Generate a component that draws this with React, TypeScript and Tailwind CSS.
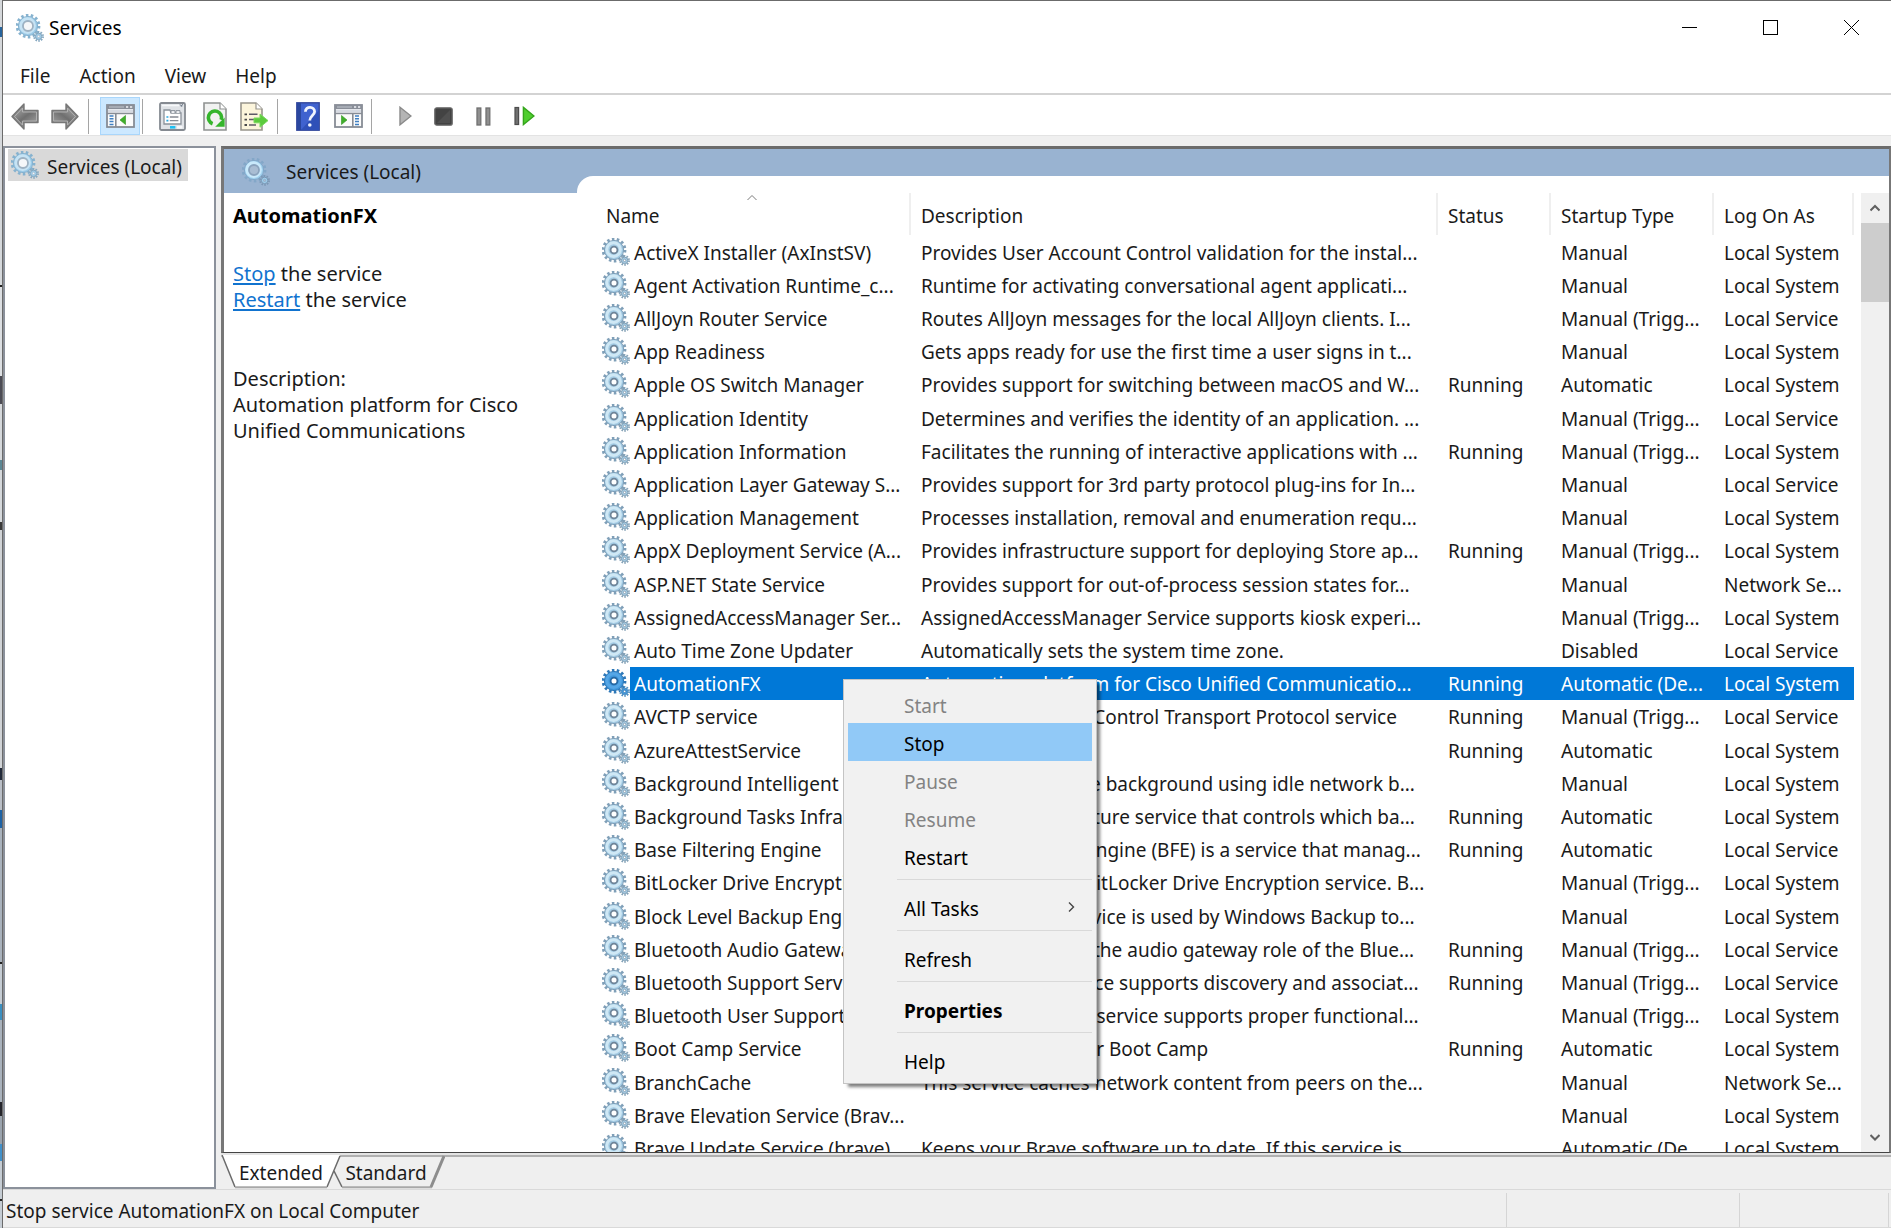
import type { ReactNode } from "react";

type Service = [name: string, description: string, status: string, startup: string, logon: string];

const LS = "Local System";
const LV = "Local Service";
const MT = "Manual (Trigg...";

const services: Service[] = [
  ["ActiveX Installer (AxInstSV)", "Provides User Account Control validation for the instal...", "", "Manual", LS],
  ["Agent Activation Runtime_c...", "Runtime for activating conversational agent applicati...", "", "Manual", LS],
  ["AllJoyn Router Service", "Routes AllJoyn messages for the local AllJoyn clients. I...", "", MT, LV],
  ["App Readiness", "Gets apps ready for use the first time a user signs in t...", "", "Manual", LS],
  ["Apple OS Switch Manager", "Provides support for switching between macOS and W...", "Running", "Automatic", LS],
  ["Application Identity", "Determines and verifies the identity of an application. ...", "", MT, LV],
  ["Application Information", "Facilitates the running of interactive applications with ...", "Running", MT, LS],
  ["Application Layer Gateway S...", "Provides support for 3rd party protocol plug-ins for In...", "", "Manual", LV],
  ["Application Management", "Processes installation, removal and enumeration requ...", "", "Manual", LS],
  ["AppX Deployment Service (A...", "Provides infrastructure support for deploying Store ap...", "Running", MT, LS],
  ["ASP.NET State Service", "Provides support for out-of-process session states for...", "", "Manual", "Network Se..."],
  ["AssignedAccessManager Ser...", "AssignedAccessManager Service supports kiosk experi...", "", MT, LS],
  ["Auto Time Zone Updater", "Automatically sets the system time zone.", "", "Disabled", LV],
  ["AutomationFX", "Automation platform for Cisco Unified Communicatio...", "Running", "Automatic (De...", LS],
  ["AVCTP service", "This is Audio Video Control Transport Protocol service", "Running", MT, LV],
  ["AzureAttestService", "", "Running", "Automatic", LS],
  ["Background Intelligent T...", "Transfers files in the background using idle network b...", "", "Manual", LS],
  ["Background Tasks Infrast...", "Windows infrastructure service that controls which ba...", "Running", "Automatic", LS],
  ["Base Filtering Engine", "The Base Filtering Engine (BFE) is a service that manag...", "Running", "Automatic", LV],
  ["BitLocker Drive Encryptio...", "BDESVC hosts the BitLocker Drive Encryption service. B...", "", MT, LS],
  ["Block Level Backup Engi...", "The WBENGINE service is used by Windows Backup to...", "", "Manual", LS],
  ["Bluetooth Audio Gateway...", "Service supporting the audio gateway role of the Blue...", "Running", MT, LV],
  ["Bluetooth Support Service", "The Bluetooth service supports discovery and associat...", "Running", MT, LV],
  ["Bluetooth User Support S...", "The Bluetooth user service supports proper functional...", "", MT, LS],
  ["Boot Camp Service", "Provides services for Boot Camp", "Running", "Automatic", LS],
  ["BranchCache", "This service caches network content from peers on the...", "", "Manual", "Network Se..."],
  ["Brave Elevation Service (Brav...", "", "", "Manual", LS],
  ["Brave Update Service (brave)", "Keeps your Brave software up to date. If this service is...", "", "Automatic (De...", LS],
];

const SELECTED = 13;

function GearIcon({ tone = "list" }: { tone?: "list" | "selected" | "pale" | "faint" }) {
  const c = {
    list: { edge: "#7f9fb8", body: "#a3cbe4", light: "#cfe8f5", ring: "#6f8599", hole: "#ffffff", small: "#86a3b8" },
    selected: { edge: "#2e78b8", body: "#3f97dc", light: "#55a6e6", ring: "#2567a3", hole: "#ffffff", small: "#4f8fc2" },
    pale: { edge: "#86b2cf", body: "#9ccbe8", light: "#c6e3f4", ring: "#9fb2c2", hole: "#f5f7f9", small: "#86a8c0" },
    faint: { edge: "#83a7c8", body: "#9fd0ee", light: "#c9e9fb", ring: "#8ba3bd", hole: "#a9bdd3", small: "#7b98b5" },
  }[tone];
  const hole = tone === "list" || tone === "selected" ? 3.4 : 5;
  return (
    <svg viewBox="0 0 28 28" className="block size-7 shrink-0" aria-hidden="true">
      <circle cx="12" cy="12" r="10.8" fill="none" stroke={c.edge} strokeWidth="3.2" strokeDasharray="2.5 2.347" />
      <circle cx="12" cy="12" r="9.6" fill={c.body} stroke={c.edge} strokeWidth="1" />
      <circle cx="11.6" cy="11.6" r="6.8" fill="none" stroke={c.light} strokeWidth="3" />
      <circle cx="12" cy="12" r={hole} fill={c.hole} stroke={c.ring} strokeWidth="1.8" />
      <circle cx="22.6" cy="22.4" r="4.2" fill="none" stroke={c.small} strokeWidth="2.4" strokeDasharray="1.5 1.139" />
      <circle cx="22.6" cy="22.4" r="3.2" fill={c.body} stroke={c.small} strokeWidth="1" />
      <circle cx="22.6" cy="22.4" r="1.2" fill={c.hole} stroke={c.ring} strokeWidth="0.6" />
    </svg>
  );
}

function ArrowIcon({ flip = false }: { flip?: boolean }) {
  return (
    <svg viewBox="0 0 28 27" className={flip ? "h-[27px] w-7 -scale-x-100" : "h-[27px] w-7"} aria-hidden="true">
      <defs>
        <linearGradient id="arrowFill" x1="0" y1="0" x2="1" y2="1">
          <stop offset="0" stopColor="#a9a9a9" />
          <stop offset="0.5" stopColor="#6f6f6f" />
          <stop offset="1" stopColor="#a2a2a2" />
        </linearGradient>
      </defs>
      <path d="M1 13.5 13 1v6.5h14v12H13V26Z" fill="#858585" stroke="#777" strokeWidth="1.4" strokeLinejoin="round" />
      <path d="M3.5 13.5 11.5 5v4h14v9h-14v4Z" fill="url(#arrowFill)" stroke="#b5b5b5" strokeWidth="0.9" />
    </svg>
  );
}

function PaneIcon({ mirrored = false }: { mirrored?: boolean }) {
  const listX = mirrored ? 21 : 3.5;
  return (
    <svg viewBox="0 0 29 24" className="h-6 w-[29px]" aria-hidden="true">
      <rect x="1" y="1" width="27" height="22" fill="#fbfbfb" stroke="#878c95" strokeWidth="1.8" />
      <rect x="1" y="1" width="27" height="4" fill="#8a8f99" />
      <path d="M3 3h15" stroke="#b9bec7" strokeWidth="1.2" />
      <path d="M20 3h2.2M24 3h2.2" stroke="#f2f4f8" strokeWidth="1.6" />
      <rect x="2" y="5.4" width="25" height="3.2" fill="#d6dae2" />
      <path d="M1 9.5h27" stroke="#878c95" strokeWidth="1.4" />
      <path d={mirrored ? "M18.8 9v14" : "M9.8 9v14"} stroke="#878c95" strokeWidth="1.6" />
      <g stroke="#3f7fc2" strokeWidth="1.5">
        <path d={`M${listX} 12h4M${listX} 14.8h4M${listX} 17.6h4M${listX} 20.4h4`} />
      </g>
      <path d={mirrored ? "M7.5 11.5v9l5.5-4.5Z" : "M19.5 11.5v9L14 16Z"} fill="#3fae2a" stroke="#2f9420" strokeWidth="0.6" />
    </svg>
  );
}

function PropertiesIcon() {
  return (
    <svg viewBox="0 0 27 29" className="h-[29px] w-[27px]" aria-hidden="true">
      <rect x="1" y="1" width="25" height="27" rx="1.5" fill="#dfe2e6" stroke="#858a91" strokeWidth="1.8" />
      <path d="M3 3.5h17" stroke="#f7f8fa" strokeWidth="1.5" />
      <path d="m21 2.4 1.8 2M23.6 2.2l-1.4 2.4" stroke="#5f6c7c" strokeWidth="1" />
      <path d="M5 8h6l1 3h10v11H5Z" fill="#fff" stroke="#8b929b" strokeWidth="1.3" />
      <path d="M12 11V8.6h4V11M17 11V8.6h4V11" fill="#eef0f3" stroke="#8b929b" strokeWidth="1" />
      <path d="M7.4 15h2M7.4 18.6h2" stroke="#2aa7e0" strokeWidth="1.6" />
      <path d="M10.8 15h8.6M10.8 18.6h8.6" stroke="#858b94" strokeWidth="1.4" />
      <rect x="11" y="24" width="5.4" height="2.6" fill="#1fc0f2" />
      <rect x="18" y="24" width="5.4" height="2.6" fill="#f7f8fa" />
    </svg>
  );
}

function RefreshIcon() {
  return (
    <svg viewBox="0 0 24 29" className="h-[29px] w-6" aria-hidden="true">
      <path d="M1 1h16l6 6v21H1Z" fill="#f1f2f1" stroke="#8f9291" strokeWidth="1.6" />
      <path d="M17 1v6h6" fill="#fff" stroke="#8f9291" strokeWidth="1.2" />
      <path d="M9.6 21.8a6.6 6.6 0 1 1 8.6-4" fill="none" stroke="#35b52c" strokeWidth="3.6" />
      <path d="M21.6 15.4v9.4h-9.4Z" fill="#35b52c" />
    </svg>
  );
}

function ExportIcon() {
  return (
    <svg viewBox="0 0 29 29" className="h-[29px] w-[29px]" aria-hidden="true">
      <path d="M1 1h15l6 6v21H1Z" fill="#fcf5dc" stroke="#98958c" strokeWidth="1.6" />
      <path d="M16 1v6h6" fill="#fff" stroke="#98958c" strokeWidth="1.2" />
      <path d="M4.5 12.3H7M4.5 17.6H7M4.5 23H7" stroke="#4a4a4a" strokeWidth="1.8" />
      <path d="M9 12.3h8.5M9 17.6h6M9 23h7" stroke="#5d5a66" strokeWidth="1.5" />
      <path d="M14 16h6v-4l8 6.6-8 6.6v-4.4h-6Z" fill="#5ccb3d" stroke="#7bd95f" strokeWidth="1" />
    </svg>
  );
}

function HelpIcon() {
  return (
    <svg viewBox="0 0 24 29" className="h-[29px] w-6" aria-hidden="true">
      <rect x="0.8" y="0.8" width="22.4" height="27.4" fill="#3f62cf" stroke="#34499d" strokeWidth="1.4" />
      <path d="M1 1h4v27H1Z" fill="#2a479f" />
      <path d="M5 28 23 8v20Z" fill="#2f50b8" />
      <path d="M9.4 9.8c0-6.2 9.4-5.6 9.2-.2-.2 4-4.8 4-4.8 9" fill="none" stroke="#f0f4fd" strokeWidth="2.8" />
      <circle cx="13.8" cy="23" r="1.8" fill="#f0f4fd" />
    </svg>
  );
}

function PlayIcon() {
  return (
    <svg viewBox="0 0 13 20" className="h-5 w-[13px]" aria-hidden="true">
      <path d="M1 1.2 12 10 1 18.8Z" fill="#b4b4b4" stroke="#8a8a8a" strokeWidth="1.4" />
    </svg>
  );
}

function StopIcon() {
  return (
    <svg viewBox="0 0 19 19" className="size-[19px]" aria-hidden="true">
      <rect x="0.8" y="0.8" width="17.4" height="17.4" rx="2" fill="#434343" stroke="#6a6a6a" strokeWidth="1.3" />
      <path d="M3 16 16 3v13Z" fill="#505050" />
    </svg>
  );
}

function PauseIcon() {
  return (
    <svg viewBox="0 0 15 19" className="h-[19px] w-[15px]" aria-hidden="true">
      <rect x="1" y="1" width="3.8" height="17" fill="#8f8f8f" stroke="#707070" strokeWidth="1.3" />
      <rect x="10" y="1" width="3.8" height="17" fill="#8f8f8f" stroke="#707070" strokeWidth="1.3" />
    </svg>
  );
}

function ResumeIcon() {
  return (
    <svg viewBox="0 0 21 20" className="h-5 w-[21px]" aria-hidden="true">
      <rect x="1" y="1.5" width="3.6" height="17" fill="#6f6f6f" stroke="#4d4d4d" strokeWidth="1.2" />
      <path d="M9.4 1.4 20 10 9.4 18.6Z" fill="#4fce2e" stroke="#35a51c" strokeWidth="1.4" />
    </svg>
  );
}

function ToolButton({ label, className, children }: { label: string; className: string; children: ReactNode }) {
  return (
    <button type="button" aria-label={label} className={`flex h-[38px] shrink-0 items-center justify-center ${className}`}>
      {children}
    </button>
  );
}

function Divider({ className }: { className: string }) {
  return <span className={`h-[35px] w-px shrink-0 bg-[#a5a5a5] ${className}`} />;
}

function Chevron({ d, className }: { d: string; className: string }) {
  return (
    <svg viewBox="0 0 10 10" fill="none" stroke="currentColor" className={className} aria-hidden="true">
      <path d={d} />
    </svg>
  );
}

function TitleBar() {
  return (
    <header className="flex h-[54px] shrink-0 items-center pl-[13px]">
      <GearIcon tone="pale" />
      <h1 className="ml-[5px] text-black">Services</h1>
      <div className="ml-auto flex self-stretch pb-[2px]">
        <button type="button" aria-label="Minimize" className="flex w-[81px] items-center justify-center">
          <svg viewBox="0 0 15 15" className="size-[15px]"><path d="M0 7.5h15" stroke="#000" /></svg>
        </button>
        <button type="button" aria-label="Maximize" className="flex w-[81px] items-center justify-center">
          <svg viewBox="0 0 15 15" className="size-[15px]"><rect x="0.5" y="0.5" width="14" height="14" fill="none" stroke="#000" /></svg>
        </button>
        <button type="button" aria-label="Close" className="flex w-20 items-center justify-center">
          <svg viewBox="0 0 15 15" className="size-[15px]"><path d="m0 0 15 15M15 0 0 15" stroke="#000" /></svg>
        </button>
      </div>
    </header>
  );
}

function MenuBar() {
  return (
    <nav className="flex h-10 shrink-0 items-center gap-[29px] border-b-2 border-[#d3d3d3] pl-[17px] pt-1">
      {["File", "Action", "View", "Help"].map((m) => (
        <button type="button" key={m}>{m}</button>
      ))}
    </nav>
  );
}

function ToolBar() {
  return (
    <div className="flex h-[41px] shrink-0 items-center border-b border-[#e3e3e3] pl-[6px] pt-[2px]">
      <ToolButton label="Back" className="w-8"><ArrowIcon /></ToolButton>
      <ToolButton label="Forward" className="ml-2 w-8"><ArrowIcon flip /></ToolButton>
      <Divider className="ml-[7px]" />
      <ToolButton label="Show/Hide Console Tree" className="ml-[11px] w-10 border border-[#a9d6fb] bg-[#cce8ff]"><PaneIcon /></ToolButton>
      <Divider className="ml-[2px]" />
      <ToolButton label="Properties" className="ml-[14px] w-[31px]"><PropertiesIcon /></ToolButton>
      <ToolButton label="Refresh" className="ml-[11px] w-[31px]"><RefreshIcon /></ToolButton>
      <ToolButton label="Export List" className="ml-[9px] w-[31px]"><ExportIcon /></ToolButton>
      <Divider className="ml-[7px]" />
      <ToolButton label="Help" className="ml-[14px] w-[31px]"><HelpIcon /></ToolButton>
      <ToolButton label="Show/Hide Action Pane" className="ml-[10px] w-[31px]"><PaneIcon mirrored /></ToolButton>
      <Divider className="ml-[7px]" />
      <ToolButton label="Start Service" className="ml-[18px] w-[31px]"><PlayIcon /></ToolButton>
      <ToolButton label="Stop Service" className="ml-[7px] w-[31px]"><StopIcon /></ToolButton>
      <ToolButton label="Pause Service" className="ml-[9px] w-[31px]"><PauseIcon /></ToolButton>
      <ToolButton label="Restart Service" className="ml-[10px] w-[31px]"><ResumeIcon /></ToolButton>
    </div>
  );
}

function TreePane() {
  return (
    <aside className="flex w-[213px] shrink-0 flex-col border-2 border-[#8b919b] bg-white">
      <button type="button" className="ml-[3px] mt-px flex h-8 w-[180px] items-center bg-[#d9d9d9] pl-[3px]">
        <GearIcon tone="pale" />
        <span className="ml-2 pt-[3px]">Services (Local)</span>
      </button>
    </aside>
  );
}

function DetailColumn() {
  return (
    <section className="flex w-[353px] shrink-0 flex-col bg-white">
      <div className="flex h-11 shrink-0 items-center bg-[#99b3d1] pl-[18px] pt-[2px]">
        <GearIcon tone="faint" />
        <h2 className="ml-[16px]">Services (Local)</h2>
      </div>
      <div className="px-[9px] pt-[10px] text-[20px] leading-[26px]">
        <h3 className="font-bold text-black">AutomationFX</h3>
        <p className="mt-8"><a href="#stop" className="text-[#1173cf] underline underline-offset-2">Stop</a> the service</p>
        <p><a href="#restart" className="text-[#1173cf] underline underline-offset-2">Restart</a> the service</p>
        <p className="mt-[53px]">Description:</p>
        <p>Automation platform for Cisco Unified Communications</p>
      </div>
    </section>
  );
}

function ServiceTable() {
  const head = "relative border-r-2 border-[#efefef] pl-[10px] pt-1 text-left align-middle font-normal";
  return (
    <table className="h-[972px] w-full table-fixed border-separate border-spacing-0 whitespace-nowrap">
      <colgroup>
        <col className="w-9" />
        <col className="w-[281px]" />
        <col />
        <col className="w-[113px]" />
        <col className="w-[163px]" />
        <col className="w-[140px]" />
      </colgroup>
      <thead>
        <tr className="h-[42px]">
          <th
            colSpan={2}
            aria-sort="ascending"
            className="relative border-r-2 border-[#efefef] pl-3 pt-1 text-left align-middle font-normal"
          >
            Name
            <span className="absolute inset-x-0 top-0 flex justify-center text-[#7b7b7b]">
              <Chevron d="M0.5 7 5 2.5 9.5 7" className="size-[10px]" />
            </span>
          </th>
          <th className={head}>Description</th>
          <th className={head}>Status</th>
          <th className={head}>Startup Type</th>
          <th className={head}>Log On As</th>
        </tr>
      </thead>
      <tbody>
        {services.map(([name, description, status, startup, logon], i) => {
          const cell = i === SELECTED ? "overflow-hidden bg-[#0078d7] p-0 pt-[2px] text-white" : "overflow-hidden p-0 pt-[2px]";
          return (
            <tr key={name} aria-selected={i === SELECTED}>
              <td className="p-0 pl-2"><GearIcon tone={i === SELECTED ? "selected" : "list"} /></td>
              <td className={cell}><div className="pl-1">{name}</div></td>
              <td className={cell}><div className="pl-[10px]">{description}</div></td>
              <td className={cell}><div className="pl-[10px]">{status}</div></td>
              <td className={cell}><div className="pl-[10px]">{startup}</div></td>
              <td className={cell}><div className="pl-[10px]">{logon}</div></td>
            </tr>
          );
        })}
      </tbody>
    </table>
  );
}

function ScrollBar() {
  return (
    <div className="flex w-7 shrink-0 flex-col bg-[#f0f0f0] text-[#606060]">
      <button type="button" aria-label="Scroll up" className="flex h-[30px] shrink-0 items-center justify-center">
        <Chevron d="M0.5 7.5 5 3l4.5 4.5" className="size-[10px] stroke-2" />
      </button>
      <div className="h-[79px] bg-[#cdcdcd]" />
      <button type="button" aria-label="Scroll down" className="mt-auto flex h-[30px] shrink-0 items-center justify-center">
        <Chevron d="M0.5 3 5 7.5 9.5 3" className="size-[10px] stroke-2" />
      </button>
    </div>
  );
}

const menuGroups: { label: string; disabled?: boolean; active?: boolean; bold?: boolean; submenu?: boolean }[][] = [
  [
    { label: "Start", disabled: true },
    { label: "Stop", active: true },
    { label: "Pause", disabled: true },
    { label: "Resume", disabled: true },
    { label: "Restart" },
  ],
  [{ label: "All Tasks", submenu: true }],
  [{ label: "Refresh" }],
  [{ label: "Properties", bold: true }],
  [{ label: "Help" }],
];

function ContextMenu() {
  return (
    <div
      role="menu"
      className="absolute left-[843px] top-[679px] z-10 flex w-[254px] flex-col border border-[#c4c4c4] bg-[#f1f1f1] px-1 pb-1 pt-[5px] shadow-[4px_4px_3px_-1px_rgba(0,0,0,0.5)]"
    >
      {menuGroups.map((group, g) => (
        <div key={group[0].label} className="flex flex-col">
          {g > 0 && <hr className="mb-2 ml-[49px] mt-1 border-[#d9d9d9]" />}
          {group.map((item) => (
            <button
              key={item.label}
              type="button"
              role="menuitem"
              disabled={item.disabled}
              className={`flex h-[38px] items-center pl-14 pr-4 pt-1 text-left ${item.active ? "bg-[#91c9f7]" : ""} ${item.disabled ? "text-[#838383]" : "text-black"} ${item.bold ? "font-bold" : ""}`}
            >
              {item.label}
              {item.submenu && <Chevron d="M3 0.5 7.5 5 3 9.5" className="mb-1 ml-auto size-[10px] stroke-[1.4] text-[#444]" />}
            </button>
          ))}
        </div>
      ))}
    </div>
  );
}

function ViewTabs() {
  return (
    <div className="flex h-[34px] shrink-0 border-t-2 border-[#b0b0b0] bg-[#efefef]">
      <button type="button" aria-pressed="true" className="relative z-[1] -mt-[2px] flex h-[34px] w-[120px] items-center justify-center pt-[2px]">
        <svg viewBox="0 0 120 34" preserveAspectRatio="none" className="absolute inset-0 size-full" aria-hidden="true">
          <path d="M0 0 14 32h92L119 0Z" fill="#fff" />
          <path d="M1 0 14 32M106 32 119 1" fill="none" stroke="#6b6b6b" strokeWidth="1.5" />
          <path d="M14 32.2h92" stroke="#a8a8a8" strokeWidth="2" />
        </svg>
        <span className="relative">Extended</span>
      </button>
      <button type="button" aria-pressed="false" className="relative -ml-2 -mt-[2px] flex h-[34px] w-28 items-center justify-center pt-[2px]">
        <svg viewBox="0 0 112 34" preserveAspectRatio="none" className="absolute inset-0 size-full" aria-hidden="true">
          <path d="M1 16 9 32" fill="none" stroke="#6b6b6b" strokeWidth="1.5" />
          <path d="M9 32.2h90" stroke="#a8a8a8" strokeWidth="2" />
          <path d="M98 32 111 1" stroke="#8d8d8d" strokeWidth="3" />
        </svg>
        <span className="relative mr-[6px]">Standard</span>
      </button>
    </div>
  );
}

function StatusBar() {
  return (
    <footer className="flex h-[39px] shrink-0 border-b border-t border-[#d9d9d9] bg-[#efefef] pt-[3px]">
      <p className="flex flex-1 items-center pl-[3px] pt-[2px]">Stop service AutomationFX on Local Computer</p>
      <span className="w-[233px] border-l border-[#d5d5d5]" />
      <span className="w-[150px] border-x border-[#d5d5d5]" />
      <span className="w-[2px]" />
    </footer>
  );
}

/** Sliver of the windows lying behind, visible along the left edge. */
function Backdrop() {
  const bands: [number, string][] = [
    [27, "bg-[#d5d8db]"], [10, "bg-[#27649c]"], [248, "bg-[#d5d8db]"], [2, "bg-[#222]"],
    [89, "bg-[#dcdfe2]"], [28, "bg-[#4c4c55]"], [56, "bg-[#d5d8db]"], [10, "bg-[#5b8794]"],
    [52, "bg-[#d5d8db]"], [8, "bg-[#3a3a3a]"], [238, "bg-[#d0d3d6]"], [12, "bg-[#222a3a]"],
    [30, "bg-[#b9bec6]"], [18, "bg-[#1f63a5]"], [134, "bg-[#a9b2bc]"], [2, "bg-[#222]"],
    [40, "bg-[#c5ccd3]"], [16, "bg-[#3b8fc0]"], [82, "bg-[#a9b2bc]"], [14, "bg-[#25252c]"],
    [28, "bg-[#9aa3ad]"], [17, "bg-[#4290c9]"], [38, "bg-[#c5ccd3]"], [2, "bg-[#222]"],
  ];
  return (
    <div className="flex w-[2px] shrink-0 flex-col bg-[#c5ccd3]">
      {bands.map(([h, tone], i) => (
        <span key={i} className={`shrink-0 ${tone}`} style={{ height: h }} />
      ))}
    </div>
  );
}

export default function App() {
  return (
    <div className="relative flex h-screen overflow-hidden bg-white font-['Noto_Sans','Segoe_UI',sans-serif] text-[19px] leading-6 text-[#1a1a1a]">
      <Backdrop />
      <div className="flex min-w-0 flex-1 flex-col border-l border-t border-[#6b6b6b]">
        <TitleBar />
        <MenuBar />
        <ToolBar />
        <main className="flex min-h-0 flex-1 gap-[5px] bg-[#efefef] pt-[10px]">
          <TreePane />
          <div className="flex min-w-0 flex-1 flex-col">
            <div className="flex min-h-0 flex-1 border-b border-l-[3px] border-r-2 border-t-[3px] border-b-[#444] border-l-[#777] border-r-[#777] border-t-[#6b6b6b] bg-[#99b3d1]">
              <DetailColumn />
              <div className="flex min-w-0 flex-1 pt-[27px]">
                <div className="flex min-w-0 flex-1 rounded-tl-2xl bg-white pl-[17px] pt-[17px]">
                  <div className="min-w-0 flex-1 overflow-hidden pr-[7px]">
                    <ServiceTable />
                  </div>
                  <ScrollBar />
                </div>
              </div>
            </div>
            <div className="h-[2px] shrink-0 bg-[#e3e3e3]" />
            <ViewTabs />
          </div>
        </main>
        <StatusBar />
      </div>
      <ContextMenu />
    </div>
  );
}
